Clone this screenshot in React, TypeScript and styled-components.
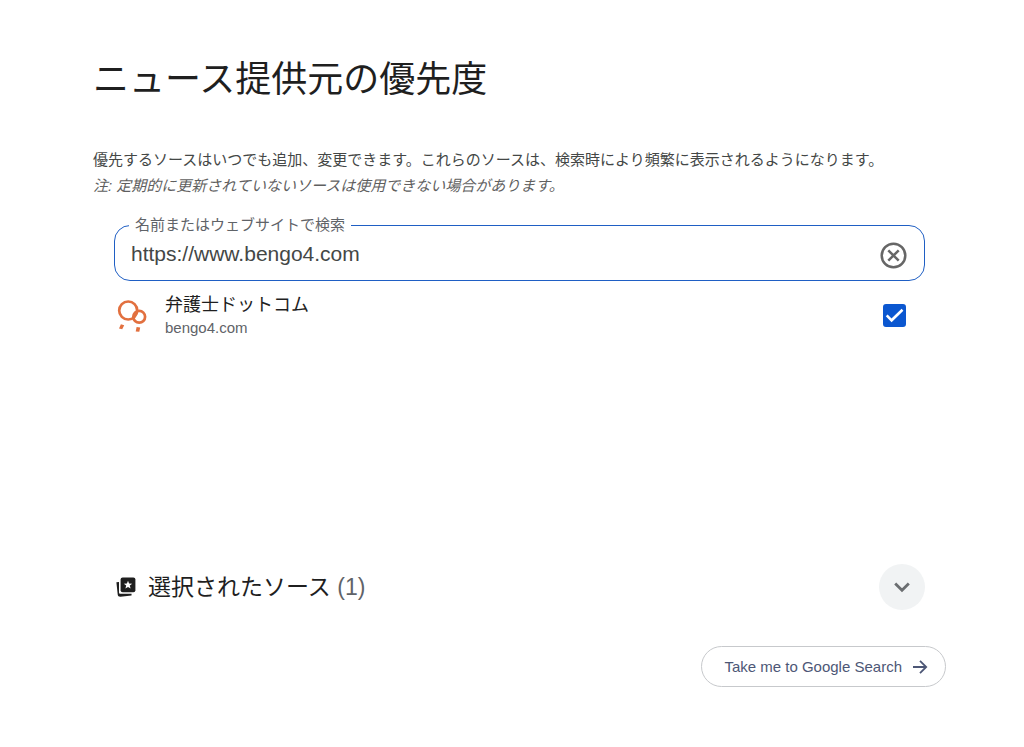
import React, { useState } from "react";
import styled, { createGlobalStyle } from "styled-components";

const GlobalStyle = createGlobalStyle`
  *, *::before, *::after { box-sizing: border-box; }
  body {
    margin: 0;
    background: #fff;
    color: #1f1f1f;
    font-family: "Liberation Sans", "Noto Sans CJK JP", sans-serif;
  }
  button, input { font-family: inherit; }
`;

const Page = styled.main`
  padding: 54px 78px 56px 93px;
`;

const Title = styled.h1`
  margin: 0;
  font-size: 36px;
  line-height: 52px;
  font-weight: 400;
`;

const Intro = styled.p<{ $note?: boolean }>`
  margin: 0;
  font-size: 15px;
  line-height: 26px;
  color: ${(p) => (p.$note ? "#5f5f5f" : "#444746")};
  font-style: ${(p) => (p.$note ? "italic" : "normal")};
`;

const IntroBlock = styled.header`
  display: grid;
  gap: 41px;
  margin-bottom: 16px;
`;

const Panel = styled.section`
  margin: 0 21px;
`;

const SearchField = styled.fieldset`
  margin: 0;
  padding: 0 17px 5px 14px;
  border: 1px solid #1f5fc4;
  border-radius: 16px;
  min-width: 0;
`;

const Legend = styled.legend`
  padding: 0 6px;
  font-size: 15px;
  line-height: 20px;
  color: #5f6368;
`;

const SearchRow = styled.div`
  display: flex;
  align-items: center;
  height: 40px;
`;

const SearchInput = styled.input`
  flex: 1;
  min-width: 0;
  height: 36px;
  padding: 0 2px 2px;
  border: 0;
  outline: 0;
  background: transparent;
  color: #444746;
  font-size: 21px;
`;

const ClearButton = styled.button`
  display: grid;
  padding: 0;
  border: 0;
  background: none;
  color: #666;
  cursor: pointer;
`;

const Results = styled.ul`
  list-style: none;
  margin: 0;
  padding: 12px 0 0;
  min-height: 283px;
`;

const ResultRow = styled.li`
  display: flex;
  align-items: center;
  padding: 0 19px 0 3px;
`;

const ResultLabel = styled.label`
  flex: 1;
  display: flex;
  align-items: center;
  gap: 18px;
`;

const SourceName = styled.span`
  display: block;
  font-size: 18px;
  line-height: 24px;
`;

const SourceHost = styled.span`
  display: block;
  font-size: 15px;
  line-height: 21px;
  color: #5f6368;
`;

const CheckWrap = styled.span`
  display: grid;
  place-items: center;
  > * { grid-area: 1 / 1; }
  svg { pointer-events: none; }
`;

const CheckBox = styled.input`
  appearance: none;
  width: 23px;
  height: 23px;
  margin: 0;
  border: 2px solid #0b57d0;
  border-radius: 3px;
  background: #fff;
  &:checked { background: #0b57d0; }
`;

const SelectedRow = styled.div`
  display: flex;
  align-items: center;
  gap: 12px;
  padding-left: 2px;
`;

const SelectedTitle = styled.h2`
  flex: 1;
  margin: 0;
  font-size: 23px;
  line-height: 32px;
  font-weight: 400;
`;

const Count = styled.span`
  color: #5f6368;
`;

const ExpandButton = styled.button`
  display: grid;
  place-items: center;
  width: 46px;
  height: 46px;
  padding: 0;
  border: 0;
  border-radius: 50%;
  background: #f1f3f4;
  color: #6b6e71;
`;

const Footer = styled.footer`
  display: flex;
  justify-content: flex-end;
  margin-top: 36px;
`;

const SearchLink = styled.a`
  display: flex;
  align-items: center;
  gap: 10px;
  height: 41px;
  padding: 0 17px 0 22px;
  border: 1px solid #c7c9cc;
  border-radius: 21px;
  color: #4d5776;
  font-size: 15px;
  text-decoration: none;
`;

const ClearIcon = () => (
  <svg width="27" height="27" viewBox="0 0 27 27" fill="none" stroke="currentColor" strokeWidth="2.5" aria-hidden="true">
    <circle cx="13.5" cy="13.5" r="11.8" />
    <path d="M8.3 8.3l10.4 10.4M18.7 8.3L8.3 18.7" />
  </svg>
);

const BengoLogo = () => (
  <svg width="30" height="32" viewBox="0 0 30 32" fill="none" stroke="#e2703f" aria-hidden="true">
    <circle cx="11.2" cy="10.5" r="9" strokeWidth="2.7" />
    <circle cx="22.2" cy="16.8" r="5.9" strokeWidth="2.7" />
    <path d="M3.9 24.3l3.3 1-2 3.9-3.2-.8zM19.6 27.1l3.6.3-.9 4.4-3.6-.3z" fill="#e2703f" stroke="none" />
  </svg>
);

const StarStackIcon = () => (
  <svg width="20" height="20" viewBox="0 0 20 20" aria-hidden="true">
    <rect x="4.6" y="0.5" width="14.8" height="14.8" rx="2" fill="#1f1f1f" />
    <path d="M0.4 5.2L3 5v10.2c0 1.1.5 1.6 1.6 1.6h11l-.1 1.8-11 1.1c-1.7.1-2.6-.6-2.8-2.2z" fill="#1f1f1f" />
    <path d="M12 3.7l1.1 2.9 3.1.1-2.4 1.9.8 3-2.6-1.7-2.6 1.7.8-3-2.4-1.9 3.1-.1z" fill="#fff" />
  </svg>
);

export default function App() {
  const [query, setQuery] = useState("https://www.bengo4.com");
  const [checked, setChecked] = useState(true);

  return (
    <>
      <GlobalStyle />
      <Page lang="ja">
        <IntroBlock>
          <Title>ニュース提供元の優先度</Title>
          <div>
            <Intro>優先するソースはいつでも追加、変更できます。これらのソースは、検索時により頻繁に表示されるようになります。</Intro>
            <Intro $note>注: 定期的に更新されていないソースは使用できない場合があります。</Intro>
          </div>
        </IntroBlock>

        <Panel>
          <SearchField>
            <Legend>
              <label htmlFor="source-search">名前またはウェブサイトで検索</label>
            </Legend>
            <SearchRow>
              <SearchInput id="source-search" type="text" value={query} onChange={(e) => setQuery(e.target.value)} />
              <ClearButton type="button" aria-label="クリア" onClick={() => setQuery("")}>
                <ClearIcon />
              </ClearButton>
            </SearchRow>
          </SearchField>

          <Results>
            <ResultRow>
              <ResultLabel htmlFor="source-bengo4">
                <BengoLogo />
                <span>
                  <SourceName>弁護士ドットコム</SourceName>
                  <SourceHost>bengo4.com</SourceHost>
                </span>
              </ResultLabel>
              <CheckWrap>
                <CheckBox id="source-bengo4" type="checkbox" checked={checked} onChange={(e) => setChecked(e.target.checked)} />
                <svg width="23" height="23" viewBox="0 0 23 23" fill="none" stroke="#fff" strokeWidth="2.6" aria-hidden="true">
                  <path d="M3.7 11.4l4.9 4.9L19.5 5.7" />
                </svg>
              </CheckWrap>
            </ResultRow>
          </Results>

          <SelectedRow>
            <StarStackIcon />
            <SelectedTitle>
              選択されたソース <Count>(1)</Count>
            </SelectedTitle>
            <ExpandButton type="button" aria-label="展開">
              <svg width="18" height="12" viewBox="0 0 18 12" fill="none" stroke="currentColor" strokeWidth="2.8" aria-hidden="true">
                <path d="M2.2 2.4L9 9.2l6.8-6.8" />
              </svg>
            </ExpandButton>
          </SelectedRow>
        </Panel>

        <Footer>
          <SearchLink href="#search">
            Take me to Google Search
            <svg width="16" height="16" viewBox="0 0 16 16" fill="none" stroke="currentColor" strokeWidth="1.8" aria-hidden="true">
              <path d="M1 8h13M8 1.8L14.2 8 8 14.2" />
            </svg>
          </SearchLink>
        </Footer>
      </Page>
    </>
  );
}
